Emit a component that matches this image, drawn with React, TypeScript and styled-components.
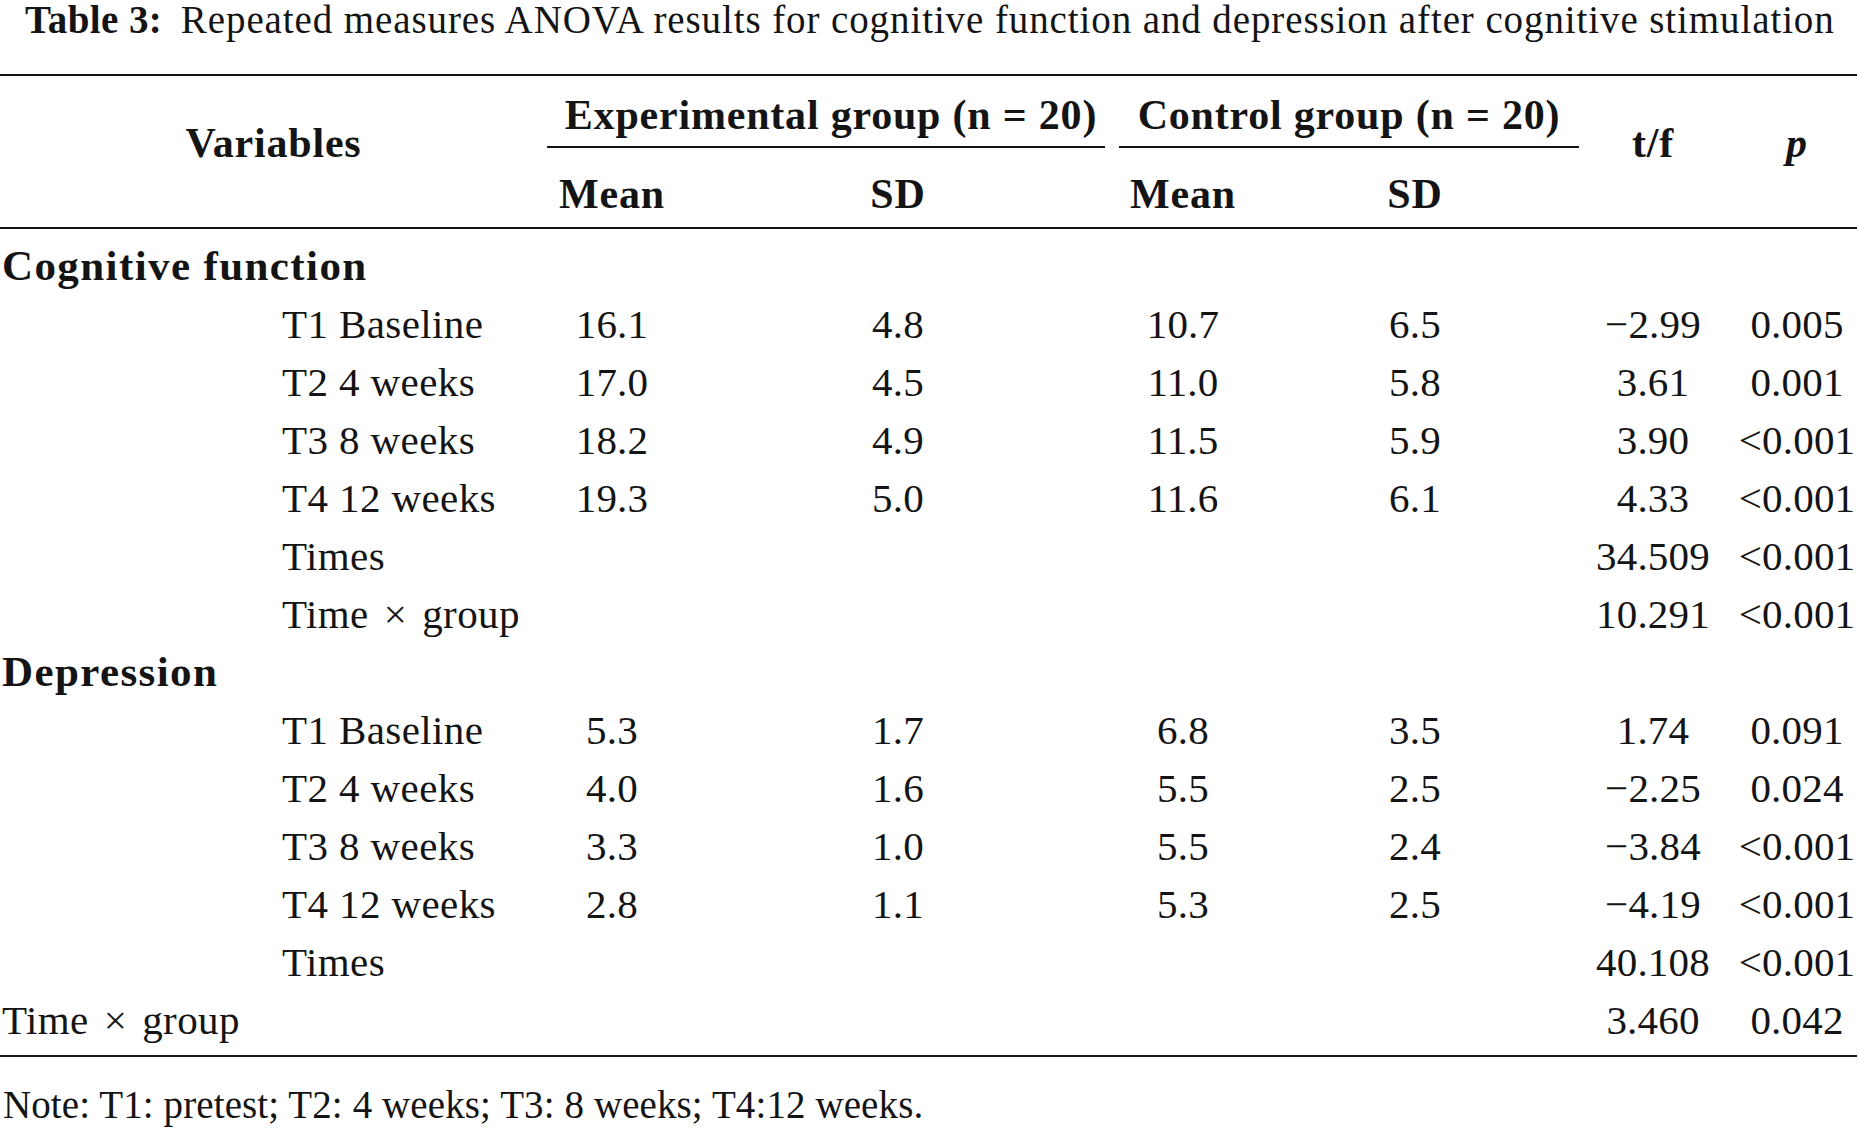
import React from "react";
import styled, { createGlobalStyle } from "styled-components";

const GlobalStyle = createGlobalStyle`
  html, body {
    margin: 0;
    padding: 0;
    background: #ffffff;
  }
  body {
    font-family: "Liberation Serif", "Times New Roman", serif;
    color: #141414;
  }
`;

const COLS = "547px 130px 442px 128px 336px 154px 120px";
const INK = "#141414";

const Page = styled.div`
  width: 1857px;
`;

const Caption = styled.div`
  font-size: 39px;
  line-height: 40px;
  letter-spacing: 0.9px;
  padding-left: 25px;
  white-space: nowrap;
  margin-bottom: 34px;
`;

const CaptionLabel = styled.b`
  font-weight: 700;
  letter-spacing: 0.4px;
  margin-right: 8px;
`;

const Rule = styled.div<{ $thick?: number }>`
  height: ${(p) => p.$thick ?? 2}px;
  background: ${INK};
`;

const HeaderGrid = styled.div`
  display: grid;
  grid-template-columns: ${COLS};
  grid-template-rows: auto auto;
  font-weight: 700;
  font-size: 42px;
  letter-spacing: 0.8px;
  line-height: 48px;
`;

const SpanHead = styled.div<{ $col: number; $italic?: boolean; $padRight?: number }>`
  grid-column: ${(p) => p.$col};
  grid-row: 1 / span 2;
  text-align: center;
  padding-top: 43px;
  padding-right: ${(p) => p.$padRight ?? 0}px;
  font-style: ${(p) => (p.$italic ? "italic" : "normal")};
`;

const GroupHead = styled.div<{ $from: number; $to: number; $trimRight: number; $padLeft: number }>`
  grid-column: ${(p) => p.$from} / ${(p) => p.$to};
  grid-row: 1;
  text-align: center;
  padding: 15px 0 7px ${(p) => p.$padLeft}px;
  margin-right: ${(p) => p.$trimRight}px;
  border-bottom: 2px solid ${INK};
  white-space: nowrap;
`;

const SubHead = styled.div<{ $col: number }>`
  grid-column: ${(p) => p.$col};
  grid-row: 2;
  text-align: center;
  padding: 22px 0 9px;
`;

const Body = styled.div`
  padding: 8px 0 6px;
`;

const Row = styled.div`
  display: grid;
  grid-template-columns: ${COLS};
  height: 58px;
  font-size: 41px;
  line-height: 58px;
  white-space: nowrap;
`;

const Label = styled.div<{ $indent?: boolean; $bold?: boolean }>`
  padding-left: ${(p) => (p.$indent ? 282 : 2)}px;
  font-weight: ${(p) => (p.$bold ? 700 : 400)};
  font-size: ${(p) => (p.$bold ? 43 : 41)}px;
  letter-spacing: ${(p) => (p.$bold ? 1.4 : 0.4)}px;
`;

const Times = styled.span`
  margin: 0 15px;
`;

const Num = styled.div<{ $padRight?: number }>`
  text-align: center;
  padding-right: ${(p) => p.$padRight ?? 0}px;
  letter-spacing: 0.2px;
`;

const Note = styled.div`
  font-size: 39px;
  line-height: 44px;
  letter-spacing: 0.1px;
  padding-left: 3px;
  margin-top: 26px;
  white-space: nowrap;
`;

type DataRow = {
  label: React.ReactNode;
  kind: "section" | "item" | "flat";
  values?: string[];
};

const timeByGroup = (
  <>
    Time<Times>{"\u00d7"}</Times>group
  </>
);

const rows: DataRow[] = [
  { label: "Cognitive function", kind: "section" },
  { label: "T1 Baseline", kind: "item", values: ["16.1", "4.8", "10.7", "6.5", "\u22122.99", "0.005"] },
  { label: "T2 4 weeks", kind: "item", values: ["17.0", "4.5", "11.0", "5.8", "3.61", "0.001"] },
  { label: "T3 8 weeks", kind: "item", values: ["18.2", "4.9", "11.5", "5.9", "3.90", "<0.001"] },
  { label: "T4 12 weeks", kind: "item", values: ["19.3", "5.0", "11.6", "6.1", "4.33", "<0.001"] },
  { label: "Times", kind: "item", values: ["", "", "", "", "34.509", "<0.001"] },
  { label: timeByGroup, kind: "item", values: ["", "", "", "", "10.291", "<0.001"] },
  { label: "Depression", kind: "section" },
  { label: "T1 Baseline", kind: "item", values: ["5.3", "1.7", "6.8", "3.5", "1.74", "0.091"] },
  { label: "T2 4 weeks", kind: "item", values: ["4.0", "1.6", "5.5", "2.5", "\u22122.25", "0.024"] },
  { label: "T3 8 weeks", kind: "item", values: ["3.3", "1.0", "5.5", "2.4", "\u22123.84", "<0.001"] },
  { label: "T4 12 weeks", kind: "item", values: ["2.8", "1.1", "5.3", "2.5", "\u22124.19", "<0.001"] },
  { label: "Times", kind: "item", values: ["", "", "", "", "40.108", "<0.001"] },
  { label: timeByGroup, kind: "flat", values: ["", "", "", "", "3.460", "0.042"] },
];

export default function App() {
  return (
    <>
      <GlobalStyle />
      <Page>
        <Caption>
          <CaptionLabel>Table 3:</CaptionLabel> Repeated measures ANOVA results for cognitive function and
          depression after cognitive stimulation
        </Caption>
        <Rule />
        <HeaderGrid>
          <SpanHead $col={1}>Variables</SpanHead>
          <GroupHead $from={2} $to={4} $trimRight={14} $padLeft={10}>
            Experimental group (n = 20)
          </GroupHead>
          <GroupHead $from={4} $to={6} $trimRight={4} $padLeft={0}>
            Control group (n = 20)
          </GroupHead>
          <SpanHead $col={6} $padRight={14}>t/f</SpanHead>
          <SpanHead $col={7} $italic>
            p
          </SpanHead>
          <SubHead $col={2}>Mean</SubHead>
          <SubHead $col={3}>SD</SubHead>
          <SubHead $col={4}>Mean</SubHead>
          <SubHead $col={5}>SD</SubHead>
        </HeaderGrid>
        <Rule />
        <Body>
          {rows.map((r, i) => (
            <Row key={i}>
              <Label $indent={r.kind === "item"} $bold={r.kind === "section"}>
                {r.label}
              </Label>
              {(r.values ?? ["", "", "", "", "", ""]).map((v, j) => (
                <Num key={j} $padRight={j === 4 ? 14 : 0}>
                  {v}
                </Num>
              ))}
            </Row>
          ))}
        </Body>
        <Rule />
        <Note>Note: T1: pretest; T2: 4 weeks; T3: 8 weeks; T4:12 weeks.</Note>
      </Page>
    </>
  );
}
